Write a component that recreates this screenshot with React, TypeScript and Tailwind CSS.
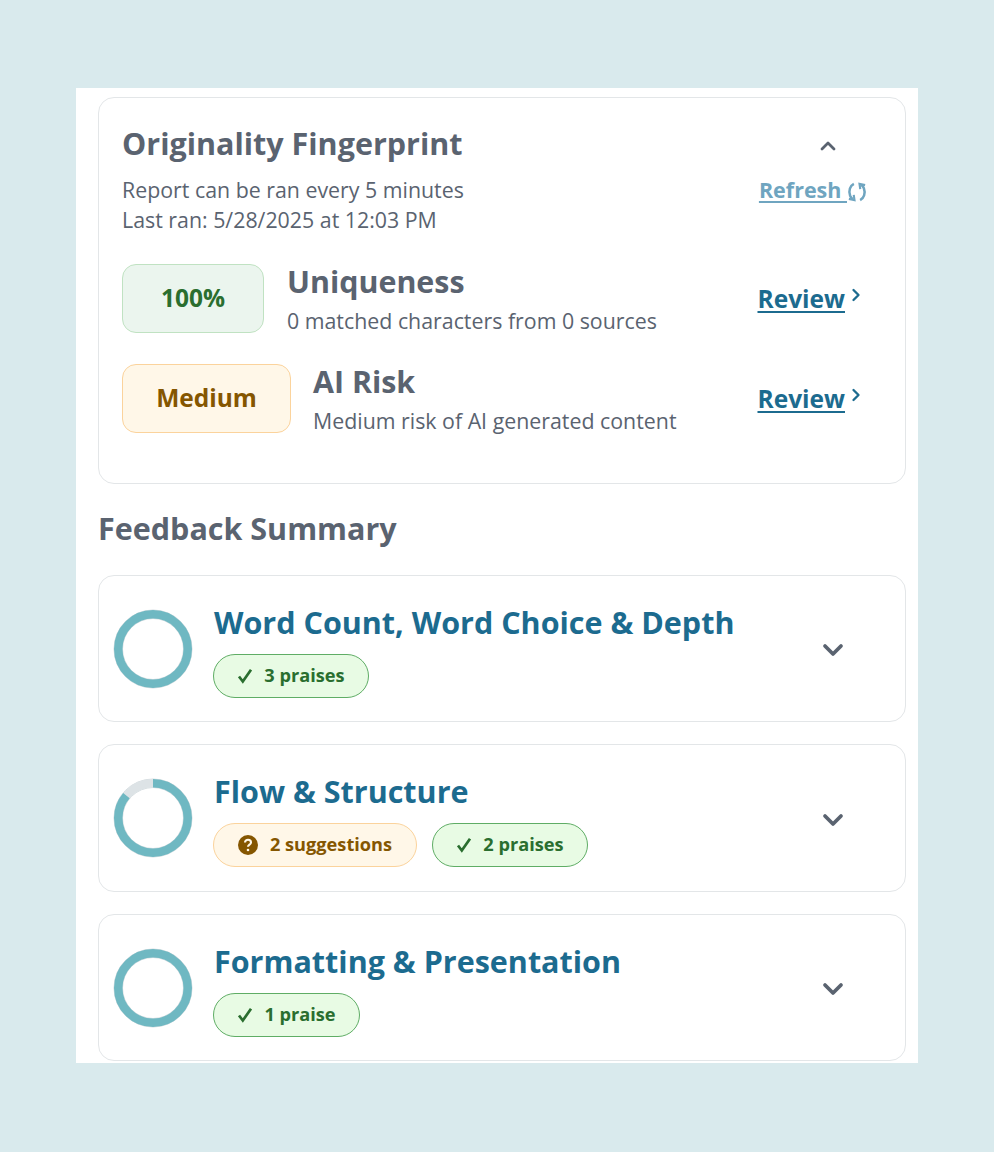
import { ChevronDown, ChevronUp, ChevronRight } from "lucide-react";

function Ring({ pct = 100 }: { pct?: number }) {
  const r = 34.75;
  const c = 2 * Math.PI * r;
  return (
    <svg width="80" height="80" viewBox="0 0 80 80" className="shrink-0">
      <circle cx="40" cy="40" r="39" fill="none" stroke="#d5dde0" strokeWidth="1" />
      <circle cx="40" cy="40" r="30.5" fill="none" stroke="#d5dde0" strokeWidth="1" />
      <circle cx="40" cy="40" r={r} fill="none" stroke="#dde3e6" strokeWidth="8.5" />
      <circle
        cx="40"
        cy="40"
        r={r}
        fill="none"
        stroke="#6fb8c2"
        strokeWidth="8.5"
        strokeDasharray={`${(c * pct) / 100} ${c}`}
        transform="rotate(-90 40 40)"
      />
    </svg>
  );
}

function CheckMark() {
  return (
    <svg width="16" height="16" viewBox="0 0 16 16" fill="none" stroke="currentColor" strokeWidth="2.7">
      <path d="M2 8.5l3.8 5L14 1.8" />
    </svg>
  );
}

function Praise({ label, w }: { label: string; w: string }) {
  return (
    <div className={`flex h-[44px] ${w} items-center justify-center gap-[11px] rounded-[22px] border border-[#5fad65] bg-[#e8fbe4] text-[18.2px] font-bold text-[#2a6e2f]`}>
      <CheckMark />
      <span>{label}</span>
    </div>
  );
}

function Suggest({ label }: { label: string }) {
  return (
    <div className="flex h-[44px] w-[204px] items-center justify-center gap-[12px] rounded-[22px] border border-[#fbd39c] bg-[#fff7e8] text-[18.2px] font-bold text-[#855600]">
      <svg width="20" height="20" viewBox="0 0 20 20">
        <circle cx="10" cy="10" r="10" fill="#855600" />
        <path d="M7 7.6c0-1.7 1.3-2.8 3-2.8s3 1 3 2.6c0 2.2-3 2.2-3 4.3" fill="none" stroke="#fff7e8" strokeWidth="2.1" />
        <circle cx="10" cy="15" r="1.3" fill="#fff7e8" />
      </svg>
      <span>{label}</span>
    </div>
  );
}

function FeedbackCard({ title, pct, children, h, mt, ml, pt }: { title: string; pct?: number; children: React.ReactNode; h: string; mt: string; ml: string; pt: string }) {
  return (
    <div className={`flex ${h} ${mt} items-center rounded-[16px] border border-[#e3e6e8] pl-[14px] pr-[56px]`}>
      <Ring pct={pct} />
      <div className={`flex flex-1 flex-col ${ml} ${pt}`}>
        <div className="text-[30.5px] leading-[41px] font-bold text-[#1c6b8f]">{title}</div>
        <div className="mt-[11px] -ml-[1px] flex gap-[15px]">{children}</div>
      </div>
      <ChevronDown size={32} strokeWidth={2.8} className="mt-[3px] text-[#5a6370]" />
    </div>
  );
}

function Metric({ badge, badgeClass, title, sub, gap }: { badge: string; badgeClass: string; title: string; sub: string; gap: string }) {
  return (
    <div className="flex h-[69px] items-center">
      <div className={`flex h-[69px] items-center justify-center rounded-[14px] border text-[24.5px] font-bold ${badgeClass}`}>{badge}</div>
      <div className={`flex flex-1 flex-col ${gap}`}>
        <div className="text-[30.4px] leading-[38px] font-bold text-[#5a6370]">{title}</div>
        <div className="mt-[6px] text-[21.35px] leading-[28px] text-[#5a6370]">{sub}</div>
      </div>
      <div className="mr-[39px] flex items-start text-[#1c6b8f]">
        <span className="text-[24.5px] leading-[32px] font-bold underline underline-offset-[3px]">Review</span>
        <ChevronRight size={20} strokeWidth={2.8} className="mt-[2px] ml-[1px]" />
      </div>
    </div>
  );
}

export default function App() {
  return (
    <div className="h-[1152px] bg-[#d9eaed] px-[76px] pt-[88px] font-['Open_Sans',sans-serif]">
      <div className="h-[975px] w-[842px] bg-white pr-[12px] pl-[22px] pt-[9px]">
        <div className="h-[387px] rounded-[16px] border border-[#e3e6e8] pt-[24px] pl-[23px]">
          <div className="flex items-center justify-between">
            <div className="text-[30.5px] leading-[42px] font-bold text-[#5a6370]">Originality Fingerprint</div>
            <ChevronUp size={24} strokeWidth={2.8} className="mt-[6px] mr-[65px] text-[#5a6370]" />
          </div>
          <div className="mt-[11px] flex items-start justify-between">
            <div className="text-[21.35px] leading-[30px] text-[#5a6370]">
              <div>Report can be ran every 5 minutes</div>
              <div>Last ran: 5/28/2025 at 12:03 PM</div>
            </div>
            <div className="mr-[38px] flex items-center text-[#6fa5c0]">
              <span className="text-[21.5px] leading-[30px] font-bold whitespace-pre underline underline-offset-[3px]">Refresh </span>
              <svg width="20" height="20" viewBox="2 2 16 16" fill="none" stroke="currentColor" strokeWidth="2" className="mt-[3px]">
                <path d="M7.5 3.5C4.5 5 3 9 4.5 13c.5 1.2 1.2 2 2 2.7" />
                <path d="M3.5 15.5l4.5 1-.6-4.2" strokeWidth="1.7" />
                <path d="M12.5 16.5c3-1.5 4.5-5.5 3-9.5-.5-1.2-1.2-2-2-2.7" />
                <path d="M16.5 4.5l-4.5-1 .6 4.2" strokeWidth="1.7" />
              </svg>
            </div>
          </div>
          <div className="mt-[29px]">
            <Metric badge="100%" badgeClass="w-[142px] border-[#c0e2c2] bg-[#ebf5ee] text-[#2a6e2f]" title="Uniqueness" sub="0 matched characters from 0 sources" gap="ml-[23px]" />
          </div>
          <div className="mt-[31px]">
            <Metric badge="Medium" badgeClass="w-[169px] border-[#fbd39c] bg-[#fff7e8] text-[#855600]" title="AI Risk" sub="Medium risk of AI generated content" gap="ml-[22px]" />
          </div>
        </div>
        <div className="mt-[23px] text-[30.5px] leading-[42px] font-bold text-[#5a6370]">Feedback Summary</div>
        <FeedbackCard title="Word Count, Word Choice & Depth" h="h-[147px]" mt="mt-[26px]" ml="ml-[21px]" pt="pt-[2px]">
          <Praise label="3 praises" w="w-[156px]" />
        </FeedbackCard>
        <FeedbackCard title="Flow & Structure" pct={86} h="h-[148px]" mt="mt-[22px]" ml="ml-[21px]" pt="pt-[2px]">
          <Suggest label="2 suggestions" />
          <Praise label="2 praises" w="w-[156px]" />
        </FeedbackCard>
        <FeedbackCard title="Formatting & Presentation" h="h-[147px]" mt="mt-[22px]" ml="ml-[21px]" pt="pt-[2px]">
          <Praise label="1 praise" w="w-[147px]" />
        </FeedbackCard>
      </div>
    </div>
  );
}
